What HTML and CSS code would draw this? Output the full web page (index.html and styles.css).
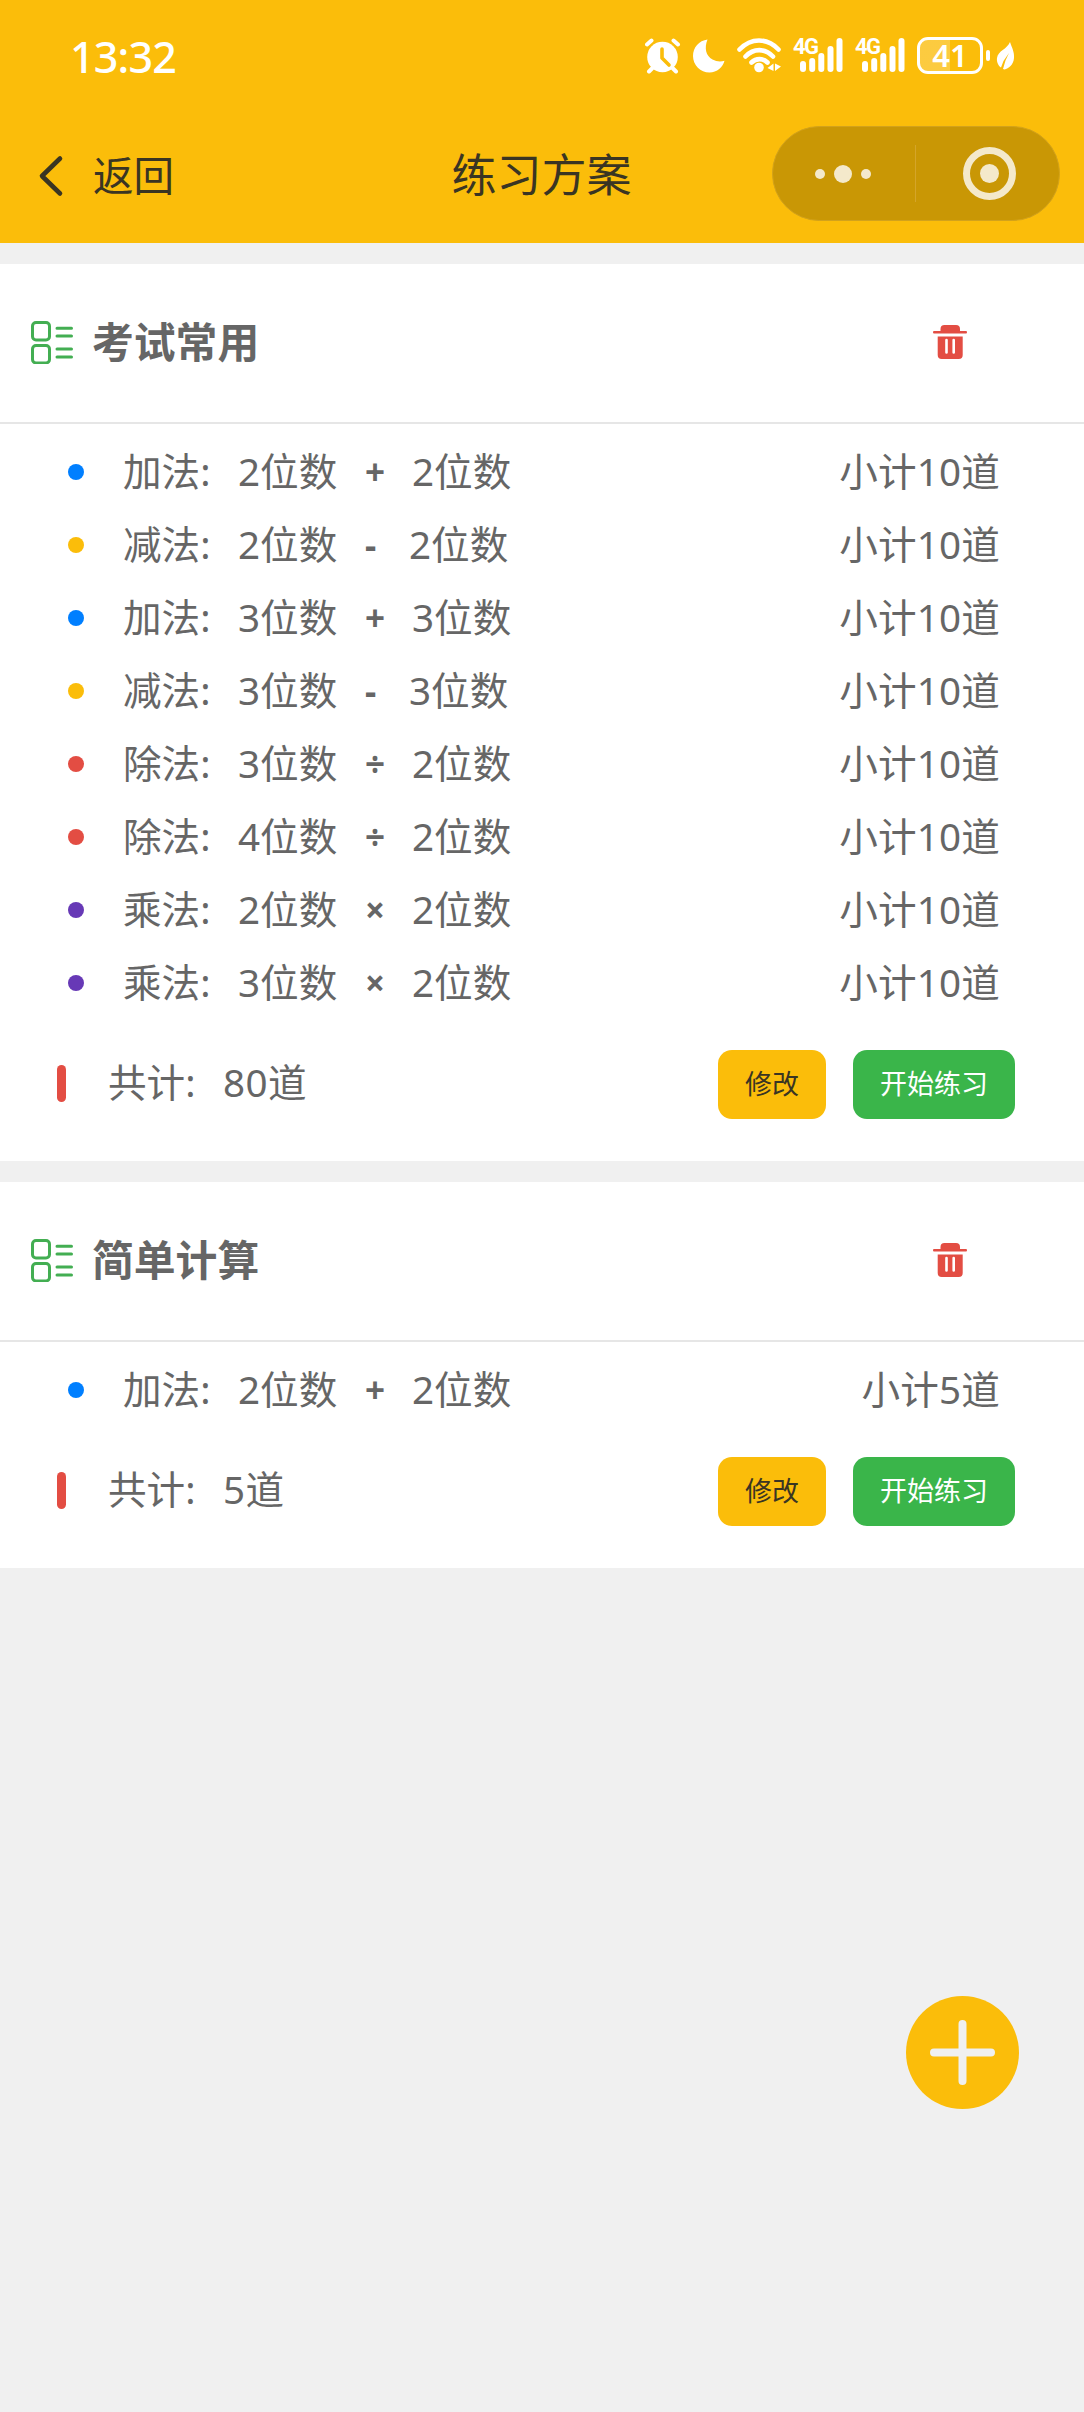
FILE: index.html
```
<!DOCTYPE html>
<html lang="zh-CN">
<head>
<meta charset="UTF-8" />
<meta name="viewport" content="width=device-width, initial-scale=1" />
<title>练习方案</title>
<link rel="stylesheet" href="styles.css">
</head>
<body>
  <svg width="0" height="0" class="defs">
    <symbol id="icon-list" viewBox="0 0 44 44">
      <g fill="none" stroke="#43ae52" stroke-width="3" stroke-linecap="round">
        <rect x="2.5" y="2.5" width="17" height="17.500" rx="3.5" />
        <rect x="2.5" y="25.5" width="17" height="17.500" rx="3.5" />
        <path d="M27 8.200h14.5M27 16h14.5M27 29h14.5M27 37h14.5" />
      </g>
    </symbol>
    <symbol id="icon-trash" viewBox="0 0 34 34">
      <path fill="#e34d43" d="M7.5 6V4q0-4 4-4h11.500q4 0 4 4v2h6q1 0 1 1.300t-1 1.300H1Q0 8.600 0 7.300T1 6z" />
      <path fill="#e34d43" d="M4.700 11.500h25v18.500q0 4-4 4h-17q-4 0-4-4z" />
      <path stroke="#fff" stroke-width="2.600" stroke-linecap="round" d="M13.500 15v12.500M20.700 15v12.500" />
    </symbol>
    <symbol id="icon-signal" viewBox="0 0 50 36">
      <g fill="#fff">
        <rect x="7" y="24" width="6" height="11" rx="3" />
        <rect x="16.200" y="21" width="6" height="14" rx="3" />
        <rect x="25.300" y="16" width="6" height="19" rx="3" />
        <rect x="34.500" y="9" width="6" height="26" rx="3" />
        <rect x="43.500" y="1" width="6" height="34" rx="3" />
      </g>
    </symbol>
  </svg>

  <header class="header">
    <div class="status">
      <span class="time">13:32</span>
      <div class="status-icons">
        <svg class="alarm" width="36" height="36" viewBox="0 0 36 36">
          <circle cx="17.500" cy="19" r="15.300" fill="#fff" />
          <path d="M2 6.500 6.500 2.500M33 6.500 28.500 2.500M7 30.500l-3 3M28 30.500l3 3" stroke="#fff" stroke-width="4" stroke-linecap="round" />
          <path d="M17 11v9l7 7" fill="none" stroke="#fbbd0a" stroke-width="3.600" stroke-linecap="round" stroke-linejoin="round" />
        </svg>
        <svg class="moon" width="32" height="34" viewBox="0 0 32 34">
          <path d="M14.500.5C11 9 13 17 19.500 20.500c4 2.200 8.500 2.300 12 1.200C30 28 24 33.500 16.500 33.500 7.500 33.500 0 26 0 17 0 8.500 6 1.500 14.500.500z" fill="#fff" />
        </svg>
        <svg class="wifi" width="45" height="35" viewBox="0 0 45 35">
          <g fill="none" stroke="#fff" stroke-width="4.600" stroke-linecap="round">
            <path d="M2.500 11.500C14-.500 30-.500 41.500 11.500" />
            <path d="M8.500 18.500C16.500 10 28 10 36 18.500" />
            <path d="M14.500 24.500C19 20 26 20 30.500 24.500" />
          </g>
          <circle cx="22" cy="29.500" r="4.800" fill="#fff" />
          <path d="M36.500 25.500v7.500l-6-3zM38 25.500v7.500l6-4.500z" fill="#fff" />
        </svg>
        <div class="signal"><svg width="50" height="36"><use href="#icon-signal" /></svg><span>4G</span></div>
        <div class="signal"><svg width="50" height="36"><use href="#icon-signal" /></svg><span>4G</span></div>
        <div class="battery">41</div>
        <i class="battery-cap"></i>
        <svg class="leaf" width="19" height="30" viewBox="0 0 19 30">
          <path d="M14 1C16 7 18.500 11 18 17c-.500 7-5.500 10.500-9.500 11.500L7 28l2.500-8.500L13 12l-5.500 8L5 26.500C2 24.500.500 20.500 1 17 2 9.500 11 8.500 14 1z" fill="#fff" />
        </svg>
      </div>
    </div>
    <div class="navbar">
      <div class="back">
        <svg width="27" height="42" viewBox="0 0 27 42">
          <path d="M23 3.500 5 21l18 17.500" fill="none" stroke="#3a3523" stroke-width="4.600" stroke-linecap="round" stroke-linejoin="round" />
        </svg>
        <span>返回</span>
      </div>
      <h1 class="title">练习方案</h1>
      <div class="capsule">
        <div class="capsule-more"><i></i><i class="big"></i><i></i></div>
        <div class="capsule-close"><i></i></div>
      </div>
    </div>
  </header>

  <main>
    <section class="card">
      <div class="card-head">
        <svg width="44" height="44"><use href="#icon-list" /></svg>
        <h2>考试常用</h2>
        <svg class="trash" width="34" height="34"><use href="#icon-trash" /></svg>
      </div>
      <ul class="list">
        <li><i class="dot blue"></i><span class="kind">加法:</span><span class="num">2位数</span><b>+</b><span>2位数</span><span class="sub">小计10道</span></li>
        <li><i class="dot yellow"></i><span class="kind">减法:</span><span class="num">2位数</span><b class="minus">-</b><span>2位数</span><span class="sub">小计10道</span></li>
        <li><i class="dot blue"></i><span class="kind">加法:</span><span class="num">3位数</span><b>+</b><span>3位数</span><span class="sub">小计10道</span></li>
        <li><i class="dot yellow"></i><span class="kind">减法:</span><span class="num">3位数</span><b class="minus">-</b><span>3位数</span><span class="sub">小计10道</span></li>
        <li><i class="dot red"></i><span class="kind">除法:</span><span class="num">3位数</span><b>÷</b><span>2位数</span><span class="sub">小计10道</span></li>
        <li><i class="dot red"></i><span class="kind">除法:</span><span class="num">4位数</span><b>÷</b><span>2位数</span><span class="sub">小计10道</span></li>
        <li><i class="dot purple"></i><span class="kind">乘法:</span><span class="num">2位数</span><b>×</b><span>2位数</span><span class="sub">小计10道</span></li>
        <li><i class="dot purple"></i><span class="kind">乘法:</span><span class="num">3位数</span><b>×</b><span>2位数</span><span class="sub">小计10道</span></li>
      </ul>
      <div class="card-foot">
        <i class="bar"></i><span class="kind">共计:</span><span class="total">80道</span>
        <button class="btn edit">修改</button>
        <button class="btn start">开始练习</button>
      </div>
    </section>

    <section class="card">
      <div class="card-head">
        <svg width="44" height="44"><use href="#icon-list" /></svg>
        <h2>简单计算</h2>
        <svg class="trash" width="34" height="34"><use href="#icon-trash" /></svg>
      </div>
      <ul class="list">
        <li><i class="dot blue"></i><span class="kind">加法:</span><span class="num">2位数</span><b>+</b><span>2位数</span><span class="sub">小计5道</span></li>
      </ul>
      <div class="card-foot">
        <i class="bar"></i><span class="kind">共计:</span><span class="total">5道</span>
        <button class="btn edit">修改</button>
        <button class="btn start">开始练习</button>
      </div>
    </section>
  </main>

  <div class="add">
    <svg width="113" height="113" viewBox="0 0 113 113">
      <path d="M56.500 28v57M28 56.500h57" stroke="#f0f0f0" stroke-width="8" stroke-linecap="round" />
    </svg>
  </div>
</body>
</html>
```
FILE: styles.css
```
* {
  box-sizing: border-box;
}

body {
  margin: 0;
  min-height: 2412px;
  background: #f0f0f0;
  color: #666;
  font-family: "Noto Sans", "Noto Sans CJK SC", sans-serif;
  font-size: 38.6px;
}

svg {
  display: block;
  flex: none;
}

.defs {
  position: absolute;
}

/* header */
.header {
  height: 243px;
  background: #fbbd0a;
}

.status {
  display: flex;
  justify-content: space-between;
  height: 110px;
  padding: 0 69px 0 70px;
  color: #fff;
}

.time {
  margin-top: 27px;
  font-size: 43px;
  font-weight: 500;
  line-height: 60px;
  letter-spacing: -0.8px;
}

.status-icons {
  display: flex;
  align-items: flex-start;
  padding-top: 37px;
}

.alarm { margin: 1px 12px 0 0; }
.moon { margin: 2px 12px 0 0; }
.wifi { margin: 1px 11px 0 0; }

.signal {
  position: relative;
  width: 50px;
  margin-right: 12px;
}

.signal span {
  position: absolute;
  left: 0;
  top: -1px;
  font-family: Roboto, sans-serif;
  font-size: 22px;
  font-weight: 700;
  line-height: 22px;
  letter-spacing: -1.5px;
}

.battery {
  width: 66px;
  height: 37px;
  border: 3px solid #fff;
  border-radius: 11px;
  background: linear-gradient(to right, rgba(255,255,255,0.22) 50%, transparent 50%);
  font-size: 31px;
  font-weight: 600;
  line-height: 30px;
  text-align: center;
}

.battery-cap {
  width: 4px;
  height: 11px;
  margin: 13px 6px 0 3px;
  border-radius: 2px;
  background: #fff;
}

.leaf { margin-top: 4px; }

.navbar {
  display: grid;
  grid-template-columns: 1fr auto 1fr;
  align-items: center;
  height: 127px;
  padding: 0 24px 0 37px;
  color: #3a3523;
}

.back {
  display: flex;
  align-items: center;
  gap: 30px;
  padding-top: 4px;
  font-size: 40.5px;
  line-height: 50px;
}

.back span {
  margin-left: -1px;
}

.title {
  margin: 0 14px 0 0;
  padding-top: 3px;
  font-size: 45px;
  font-weight: 400;
  line-height: 60px;
}

.capsule {
  display: flex;
  align-items: center;
  justify-self: end;
  width: 288px;
  height: 95px;
  border: 1px solid #d2a21c;
  border-radius: 48px;
  background: #c99705;
}

.capsule-more {
  display: flex;
  align-items: center;
  justify-content: center;
  gap: 9px;
  width: 143px;
  height: 57px;
  padding-right: 2px;
  border-right: 1px solid #d4a52a;
}

.capsule-more i {
  width: 10px;
  height: 10px;
  border-radius: 50%;
  background: #f4e9cb;
}

.capsule-more .big {
  width: 18px;
  height: 18px;
}

.capsule-close {
  display: flex;
  align-items: center;
  justify-content: center;
  width: 53px;
  height: 53px;
  margin-left: 47px;
  border: 7px solid #f4e9cb;
  border-radius: 50%;
}

.capsule-close i {
  width: 19px;
  height: 19px;
  border-radius: 50%;
  background: #f4e9cb;
}

/* cards */
.card {
  margin-top: 21px;
  padding-bottom: 42px;
  background: #fff;
}

.card-head {
  display: flex;
  align-items: center;
  height: 160px;
  padding: 0 117px 2px 30px;
  border-bottom: 2px solid #e6e6e6;
}

.card-head h2 {
  margin: 0 auto 0 18px;
  font-size: 41.8px;
  line-height: 60px;
}

.list {
  margin: 0;
  padding: 11px 84px 31px 68px;
  list-style: none;
}

.list li {
  display: flex;
  align-items: center;
  height: 73px;
  line-height: 73px;
}

.dot {
  width: 16px;
  height: 16px;
  margin-right: 39px;
  border-radius: 50%;
}

.blue { background: #007fff; }
.yellow { background: #fbbd0a; }
.red { background: #e34d43; }
.purple { background: #6739b6; }

.kind {
  width: 115px;
}

.num {
  width: 127px;
}

.list b {
  width: 47px;
  font-size: 35px;
}

.list .minus {
  width: 44px;
}

.sub {
  margin-left: auto;
  letter-spacing: 0.2px;
}

.card-foot {
  display: flex;
  align-items: center;
  height: 69px;
  padding: 0 69px 0 57px;
}

.card-foot span {
  height: 69px;
  line-height: 65px;
}

.bar {
  width: 9px;
  height: 37px;
  margin: 0 42px 2px 0;
  border-radius: 5px;
  background: #e34d43;
}

.total {
  letter-spacing: 0.4px;
}

.btn {
  height: 69px;
  padding: 0 27px 4px;
  border: none;
  border-radius: 14px;
  font-family: inherit;
  font-size: 27px;
  cursor: pointer;
}

.edit {
  margin: 0 27px 0 auto;
  background: #fbbd0a;
  color: #3a3523;
}

.start {
  background: #3ab54a;
  color: #fff;
}

/* floating add button */
.add {
  position: fixed;
  left: 906px;
  top: 1996px;
  width: 113px;
  height: 113px;
  border-radius: 50%;
  background: #fbbd0a;
}
```
